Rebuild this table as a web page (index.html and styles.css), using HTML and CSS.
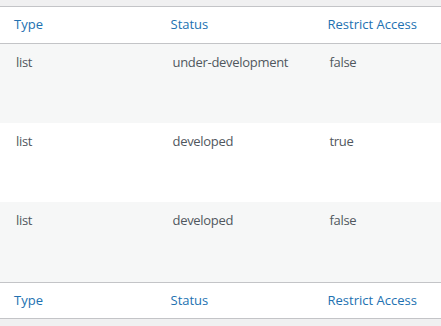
FILE: index.html
```html
<!DOCTYPE html>
<html lang="en">
<head>
<meta charset="utf-8">
<title>List table</title>
<link rel="stylesheet" href="styles.css">
</head>
<body>
<div class="wrap">
<table class="list-table">
  <colgroup>
    <col class="c1">
    <col class="c2">
    <col class="c3">
  </colgroup>
  <thead>
    <tr>
      <th><a href="#">Type</a></th>
      <th><a href="#">Status</a></th>
      <th><a href="#">Restrict Access</a></th>
    </tr>
  </thead>
  <tbody>
    <tr class="alt">
      <td>list</td>
      <td>under-development</td>
      <td>false</td>
    </tr>
    <tr>
      <td>list</td>
      <td>developed</td>
      <td>true</td>
    </tr>
    <tr class="alt last">
      <td>list</td>
      <td>developed</td>
      <td>false</td>
    </tr>
  </tbody>
  <tfoot>
    <tr>
      <th><a href="#">Type</a></th>
      <th><a href="#">Status</a></th>
      <th><a href="#">Restrict Access</a></th>
    </tr>
  </tfoot>
</table>
</div>
</body>
</html>
```

FILE: styles.css
```css
html, body {
  margin: 0;
  padding: 0;
}
body {
  background: #f0f0f1;
  font-family: "Open Sans", "Noto Sans", sans-serif;
  font-size: 13px;
  color: #50575e;
  overflow: hidden;
}
.wrap {
  padding-top: 6px;
  width: 441px;
  overflow: hidden;
}
.list-table {
  width: 482px;
  margin-left: -2px;
  border-collapse: collapse;
  table-layout: fixed;
  background: #fff;
  border: 1px solid #c3c4c7;
}
.c1 { width: 164px; }
.c2 { width: 157px; }
.c3 { width: 161px; }

.list-table th {
  text-align: left;
  font-weight: 400;
  padding: 0;
  line-height: 18px;
}
.list-table th a {
  display: block;
  color: #2271b1;
  text-decoration: none;
  padding: 8px 8px 10px 8px;
}
.list-table th:first-child a {
  padding-left: 15px;
}
.list-table thead tr {
  border-bottom: 1px solid #c3c4c7;
}
.list-table tfoot tr {
  border-top: 1px solid #c3c4c7;
}
.list-table tfoot th a {
  padding-bottom: 9px;
}
.list-table td {
  padding: 9px 10px 52px 10px;
  line-height: 18px;
  vertical-align: top;
  letter-spacing: -0.3px;
}
.list-table tr.last td {
  padding-bottom: 53px;
}
.list-table td:first-child {
  padding-left: 17px;
}
.list-table tr.alt {
  background: #f6f7f7;
}
```
